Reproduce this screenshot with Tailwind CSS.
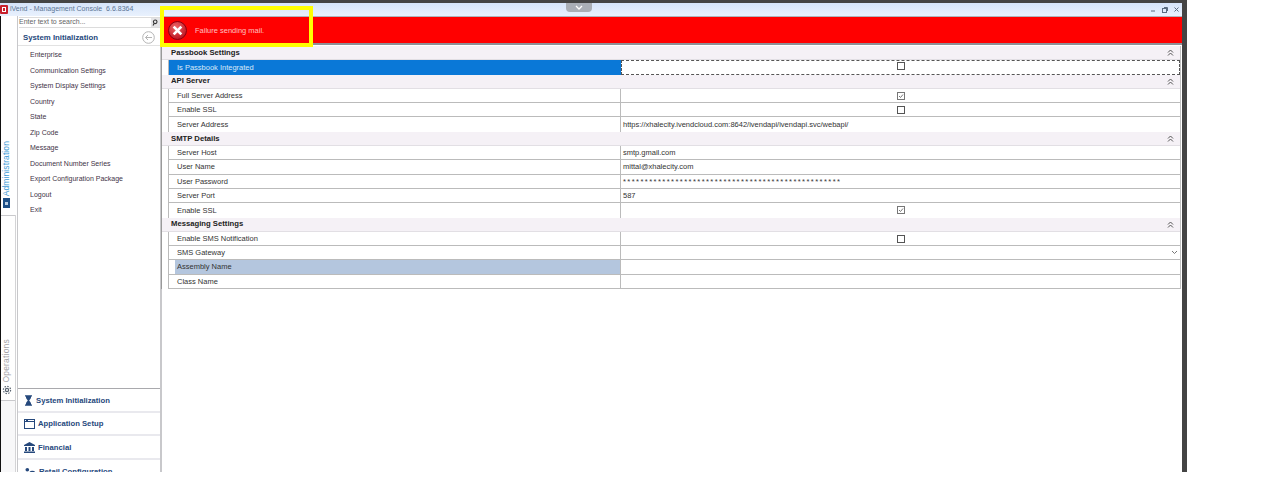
<!DOCTYPE html>
<html lang="en">
<head>
    <meta charset="UTF-8">
    <meta name="viewport" content="width=device-width, initial-scale=1.0">
    <title>iVend - Management Console</title>
    <script src="https://cdn.jsdelivr.net/npm/@tailwindcss/browser@4"></script>
</head>
<body class="bg-white font-['Liberation_Sans',sans-serif] text-[7.5px] text-[#333] overflow-hidden">
<div class="relative w-[1271px] h-[501px]">
    <!-- Window -->
    <div class="flex flex-col w-[1187px] h-[472px] border-r-[5px] border-[#444] overflow-hidden">
        <div class="h-[3px] bg-[#444] shrink-0"></div>

        <!-- Title bar -->
        <div class="relative flex items-center h-[13px] shrink-0 bg-gradient-to-b from-[#d5e4fa] to-[#e9f1fd] text-[#5b7595]">
            <div class="w-[8px] h-[9px] bg-[#c8202c] rounded-[1px] mr-[2px] flex items-center justify-center">
                <div class="w-[4px] h-[5px] border border-white"></div>
            </div>
            <span class="text-[7px]">iVend - Management Console&nbsp;&nbsp;6.6.8364</span>
            <div class="absolute left-[566px] top-0 w-[26px] h-[9px] bg-[#a9aeb6] rounded-b-[4px] flex justify-center items-center">
                <svg width="8" height="5" viewBox="0 0 8 5" fill="none" stroke="white" stroke-width="1.3"><path d="M1 1l3 3 3-3"/></svg>
            </div>
            <div class="ml-auto flex items-center gap-[6px] pr-[3px] text-[#5a6b80]">
                <svg width="5" height="5" viewBox="0 0 5 5" stroke="currentColor" fill="none"><path d="M0 4h4"/></svg>
                <svg width="6" height="6" viewBox="0 0 6 6" stroke="currentColor" fill="none"><rect x="0.5" y="1.5" width="4" height="4"/><path d="M2 .5h3.5v3.5"/></svg>
                <svg width="5" height="5" viewBox="0 0 5 5" stroke="currentColor" fill="none"><path d="M.5.5l4 4M4.5.5l-4 4"/></svg>
            </div>
        </div>

        <div class="flex flex-1 min-h-0 bg-white">
            <!-- Left rail -->
            <div class="flex flex-col w-[17px] shrink-0 border-l border-[#111]">
                <div class="flex flex-col items-center w-[10px] h-[199px] shrink-0 justify-end pb-[7px]">
                    <span class="[writing-mode:vertical-rl] rotate-180 text-[8.5px] text-[#3d9bd6] tracking-[0.1px]">Administration</span>
                    <div class="w-[7px] h-[10px] mt-[2px] bg-[#1d4f86] flex items-center justify-center">
                        <div class="w-[3px] h-[3px] bg-[#b9cde2]"></div>
                    </div>
                </div>
                <div class="flex flex-col flex-1 w-[15px] border-r border-[#d4d4d6] bg-[#f8f8f9]">
                    <div class="flex flex-col items-center justify-end h-[186px] shrink-0 border-y border-[#c9c9cc] pb-[5px] pr-[3px] bg-white">
                        <span class="[writing-mode:vertical-rl] rotate-180 text-[8.5px] text-[#a5a5a8] tracking-[0.2px]">Operations</span>
                        <svg class="mt-[2px]" width="10" height="10" viewBox="0 0 10 10" fill="none" stroke="#5a6470" stroke-width="1.2"><circle cx="5" cy="5" r="1.6"/><circle cx="5" cy="5" r="3.6" stroke-dasharray="1.5 1.3"/></svg>
                    </div>
                </div>
            </div>

            <!-- Navigation -->
            <div class="flex flex-col w-[144px] shrink-0 border-l border-r border-[#c8c8cb] pt-px">
                <div class="flex items-center h-[11px] border-y border-[#dcdcdc] ml-px shrink-0 text-[#666]">
                    <span class="flex-1 text-[7px]">Enter text to search...</span>
                    <div class="w-[9px] h-full bg-[#e4e4e6] flex items-center justify-center">
                        <svg width="7" height="7" viewBox="0 0 7 7" fill="none" stroke="#333" stroke-width="1.1"><circle cx="3.2" cy="2.8" r="1.8"/><path d="M2.2 4.5L1 6.5"/></svg>
                    </div>
                </div>
                <div class="flex items-center justify-between h-[18px] pt-[2px] pl-[5px] pr-[5px] border-b border-[#e2e2e2] shrink-0">
                    <span class="text-[7.8px] font-bold text-[#25487c]">System Initialization</span>
                    <svg width="13" height="13" viewBox="0 0 13 13" fill="none" stroke="#b4b4b4"><circle cx="6.5" cy="6.5" r="5.8"/><path d="M10 6.5H3.500M6 4L3.500 6.500 6 9"/></svg>
                </div>
                <ul class="flex flex-col pt-[1.5px] pl-[12px] flex-1 min-h-0 text-[7px] text-[#3f3347]">
                    <li class="h-[15.5px] flex items-center">Enterprise</li>
                    <li class="h-[15.5px] flex items-center">Communication Settings</li>
                    <li class="h-[15.5px] flex items-center">System Display Settings</li>
                    <li class="h-[15.5px] flex items-center">Country</li>
                    <li class="h-[15.5px] flex items-center">State</li>
                    <li class="h-[15.5px] flex items-center">Zip Code</li>
                    <li class="h-[15.5px] flex items-center">Message</li>
                    <li class="h-[15.5px] flex items-center">Document Number Series</li>
                    <li class="h-[15.5px] flex items-center">Export Configuration Package</li>
                    <li class="h-[15.5px] flex items-center">Logout</li>
                    <li class="h-[15.5px] flex items-center">Exit</li>
                </ul>
                <div class="flex flex-col shrink-0 h-[84px] border-t border-[#a9a9ad] text-[7.7px] font-bold text-[#25487c] overflow-hidden">
                    <div class="flex items-center gap-[4px] h-[23.5px] shrink-0 pt-[2px] pl-[7px] border-b-2 border-[#e9e9ee]">
                        <svg width="7" height="11" viewBox="0 0 8 12" fill="#25487c"><path d="M0 0h8v1.5H7c0 2.500-1.500 3.500-2.200 4.500C5.500 7 7 8 7 10.500h1V12H0v-1.500h1C1 8 2.500 7 3.200 6 2.500 5 1 4 1 1.500H0z"/></svg>
                        <span>System Initialization</span>
                    </div>
                    <div class="flex items-center gap-[3px] h-[23.5px] shrink-0 pt-[2px] pl-[6px] border-b-2 border-[#e9e9ee]">
                        <svg width="11" height="10" viewBox="0 0 11 10" fill="#fff" stroke="#25487c"><rect x="0.5" y="0.5" width="10" height="9"/><path d="M.5 2.500h10M2 1.500h2" /></svg>
                        <span>Application Setup</span>
                    </div>
                    <div class="flex items-center gap-[3px] h-[23.5px] shrink-0 pt-[2px] pl-[6px] border-b-2 border-[#e9e9ee]">
                        <svg width="11" height="11" viewBox="0 0 11 11" fill="#25487c"><path d="M5.500 0L11 3v1H0V3zM1 5h2v4H1zM4.500 5h2v4h-2zM8 5h2v4H8zM0 9.500h11V11H0z"/></svg>
                        <span>Financial</span>
                    </div>
                    <div class="flex items-center gap-[3px] h-[23.5px] shrink-0 pt-[2px] pl-[7px]">
                        <svg width="11" height="11" viewBox="0 0 12 11" fill="#25487c"><circle cx="2.500" cy="2.500" r="2"/><circle cx="8" cy="7" r="3.500"/></svg>
                        <span>Retail Configuration</span>
                    </div>
                </div>
            </div>

            <!-- Main -->
            <div class="flex flex-col flex-1 min-w-0">
                <div class="h-[1px] bg-[#b0b3bb] shrink-0"></div>
                <div class="h-[26px] bg-[#ff0000] shrink-0"></div>
                <div class="h-[3px] shrink-0 bg-[#8e9097] border-b border-white"></div>
                <div class="border-l border-[#9a9a9a] border-r border-r-[#c2c2c2] mr-[1px]">
                    <!-- Passbook Settings -->
                    <div class="flex items-center justify-between h-[14.3px] pl-[9px] pr-[6px] bg-[#f5f1f6] border-b border-[#e2dfe4] text-[7.7px] font-bold text-[#222]"><span>Passbook Settings</span>
                        <svg width="7" height="7" viewBox="0 0 7 7" fill="none" stroke="#555"><path d="M1 3.500l2.500-2.500L6 3.500M1 6.500L3.500 4 6 6.500"/></svg>
                    </div>
                    <div class="flex h-[14.3px] ml-[6px] border-l border-[#bbb]">
                        <div class="flex items-center w-[452px] pl-[8px] bg-[#0a78d7] text-[#d8e8f8]">Is Passbook Integrated</div>
                        <div class="flex items-center justify-center flex-1 border border-dashed border-[#555]">
                            <div class="w-[8px] h-[8px] -translate-y-px border border-[#555] bg-white"></div>
                        </div>
                    </div>
                    <!-- API Server -->
                    <div class="flex items-center justify-between h-[14.3px] pl-[9px] pr-[6px] bg-[#f5f1f6] border-b border-[#e2dfe4] text-[7.7px] font-bold text-[#222]"><span>API Server</span>
                        <svg width="7" height="7" viewBox="0 0 7 7" fill="none" stroke="#555"><path d="M1 3.500l2.500-2.500L6 3.500M1 6.500L3.500 4 6 6.500"/></svg>
                    </div>
                    <div class="flex h-[14.3px] ml-[6px] border-l border-b border-[#bbb]">
                        <div class="flex items-center w-[452px] pl-[8px] border-r border-[#bbb]">Full Server Address</div>
                        <div class="flex items-center justify-center flex-1">
                            <svg width="8" height="8" viewBox="0 0 8 8" fill="#fff" stroke="#777"><rect x="0.5" y="0.5" width="7" height="7"/><path d="M2 4l1.500 1.500L6 2.500"/></svg>
                        </div>
                    </div>
                    <div class="flex h-[14.3px] ml-[6px] border-l border-b border-[#bbb]">
                        <div class="flex items-center w-[452px] pl-[8px] border-r border-[#bbb]">Enable SSL</div>
                        <div class="flex items-center justify-center flex-1">
                            <div class="w-[8px] h-[8px] border border-[#555] bg-white"></div>
                        </div>
                    </div>
                    <div class="flex h-[14.3px] ml-[6px] border-l border-[#bbb]">
                        <div class="flex items-center w-[452px] pl-[8px] border-r border-[#bbb]">Server Address</div>
                        <div class="flex items-center flex-1 pl-[2px]">https://xhalecity.ivendcloud.com:8642/ivendapi/ivendapi.svc/webapi/</div>
                    </div>
                    <!-- SMTP Details -->
                    <div class="flex items-center justify-between h-[14.3px] pl-[9px] pr-[6px] bg-[#f5f1f6] border-b border-[#e2dfe4] text-[7.7px] font-bold text-[#222]"><span>SMTP Details</span>
                        <svg width="7" height="7" viewBox="0 0 7 7" fill="none" stroke="#555"><path d="M1 3.500l2.500-2.500L6 3.500M1 6.500L3.500 4 6 6.500"/></svg>
                    </div>
                    <div class="flex h-[14.3px] ml-[6px] border-l border-b border-[#bbb]">
                        <div class="flex items-center w-[452px] pl-[8px] border-r border-[#bbb]">Server Host</div>
                        <div class="flex items-center flex-1 pl-[2px]">smtp.gmail.com</div>
                    </div>
                    <div class="flex h-[14.3px] ml-[6px] border-l border-b border-[#bbb]">
                        <div class="flex items-center w-[452px] pl-[8px] border-r border-[#bbb]">User Name</div>
                        <div class="flex items-center flex-1 pl-[2px]">mittal@xhalecity.com</div>
                    </div>
                    <div class="flex h-[14.3px] ml-[6px] border-l border-b border-[#bbb]">
                        <div class="flex items-center w-[452px] pl-[8px] border-r border-[#bbb]">User Password</div>
                        <div class="flex items-center flex-1 pl-[2px] tracking-[1.45px]">**************************************************</div>
                    </div>
                    <div class="flex h-[14.3px] ml-[6px] border-l border-b border-[#bbb]">
                        <div class="flex items-center w-[452px] pl-[8px] border-r border-[#bbb]">Server Port</div>
                        <div class="flex items-center flex-1 pl-[2px]">587</div>
                    </div>
                    <div class="flex h-[14.3px] ml-[6px] border-l border-[#bbb]">
                        <div class="flex items-center w-[452px] pl-[8px] border-r border-[#bbb]">Enable SSL</div>
                        <div class="flex items-center justify-center flex-1">
                            <svg width="8" height="8" viewBox="0 0 8 8" fill="#fff" stroke="#777"><rect x="0.5" y="0.5" width="7" height="7"/><path d="M2 4l1.500 1.500L6 2.500"/></svg>
                        </div>
                    </div>
                    <!-- Messaging Settings -->
                    <div class="flex items-center justify-between h-[14.3px] pl-[9px] pr-[6px] bg-[#f5f1f6] border-b border-[#e2dfe4] text-[7.7px] font-bold text-[#222]"><span>Messaging Settings</span>
                        <svg width="7" height="7" viewBox="0 0 7 7" fill="none" stroke="#555"><path d="M1 3.500l2.500-2.500L6 3.500M1 6.500L3.500 4 6 6.500"/></svg>
                    </div>
                    <div class="flex h-[14.3px] ml-[6px] border-l border-b border-[#bbb]">
                        <div class="flex items-center w-[452px] pl-[8px] border-r border-[#bbb]">Enable SMS Notification</div>
                        <div class="flex items-center justify-center flex-1">
                            <div class="w-[8px] h-[8px] border border-[#555] bg-white"></div>
                        </div>
                    </div>
                    <div class="flex h-[14.3px] ml-[6px] border-l border-b border-[#bbb]">
                        <div class="flex items-center w-[452px] pl-[8px] border-r border-[#bbb]">SMS Gateway</div>
                        <div class="flex items-center justify-end flex-1 pr-[2px]">
                            <svg width="7" height="5" viewBox="0 0 7 5" fill="none" stroke="#777"><path d="M1 1l2.500 2.500L6 1"/></svg>
                        </div>
                    </div>
                    <div class="flex h-[14.3px] ml-[6px] border-l border-b border-[#bbb]">
                        <div class="w-[452px] pl-[6px] border-r border-[#bbb]">
                            <div class="flex items-center h-full pl-[2px] bg-[#b4c6de]">Assembly Name</div>
                        </div>
                        <div class="flex-1"></div>
                    </div>
                    <div class="flex h-[14.3px] ml-[6px] border-l border-b border-[#bbb]">
                        <div class="flex items-center w-[452px] pl-[8px] border-r border-[#bbb]">Class Name</div>
                        <div class="flex-1"></div>
                    </div>
                </div>
                <div class="flex-1 border-l border-[#c8c8cb]"></div>
            </div>
        </div>
    </div>

    <!-- Error toast with yellow highlight over the banner -->
    <div class="absolute left-[160px] top-[6px] w-[153px] h-[41px] border-[4px] border-[#ffff00] flex items-center pl-[4px] pt-[8px] text-[#ffc0c0]">
        <div class="w-[19px] h-[19px] rounded-full border border-[#8c0010] bg-[radial-gradient(circle_at_40%_30%,#e66,#b00010)] flex items-center justify-center">
            <svg width="11" height="11" viewBox="0 0 10 10" stroke="white" stroke-width="2.4"><path d="M1.5 1.5l7 7M8.5 1.5l-7 7"/></svg>
        </div>
        <span class="ml-[8px]">Failure sending mail.</span>
    </div>
</div>
</body>
</html>
